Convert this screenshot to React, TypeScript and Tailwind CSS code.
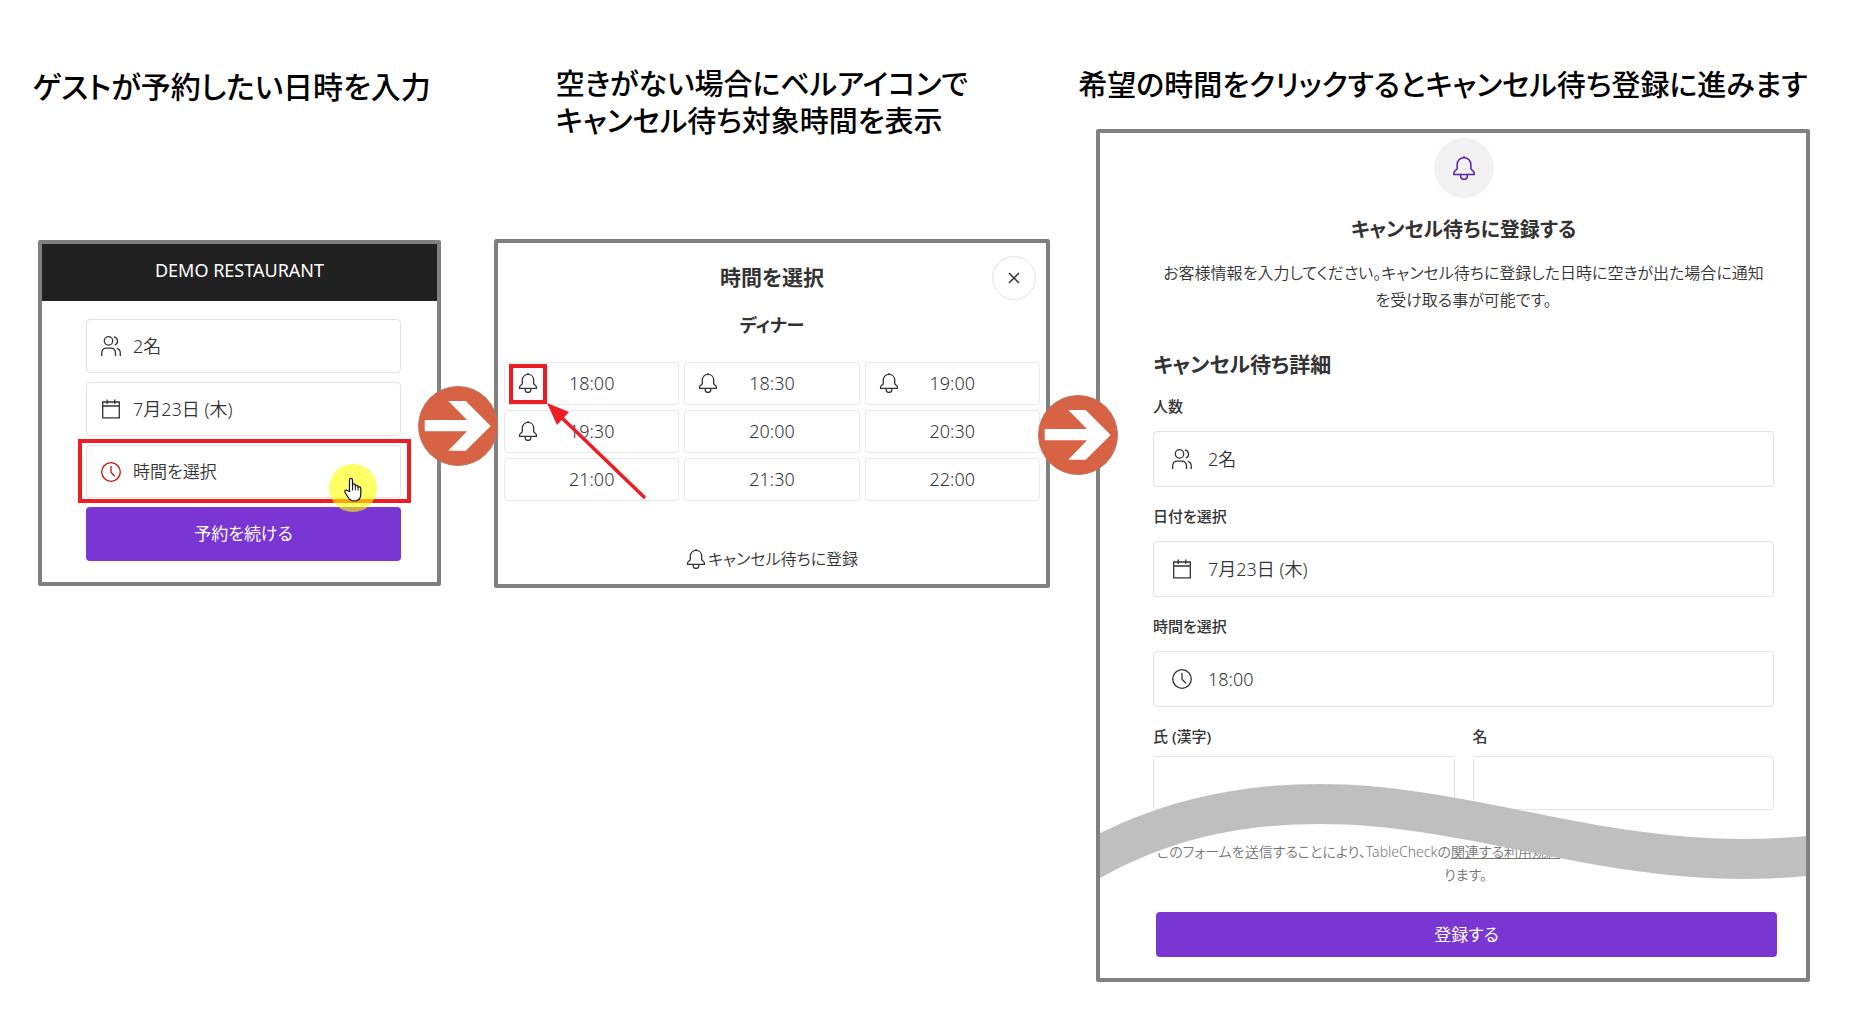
import React from "react";

type IconProps = { className?: string };

const Svg = ({ className = "h-5 w-5", children }: IconProps & { children: React.ReactNode }) => (
  <svg
    viewBox="0 0 20 20"
    className={`shrink-0 ${className}`}
    fill="none"
    stroke="currentColor"
    strokeWidth="1.3"
    aria-hidden="true"
  >
    {children}
  </svg>
);

const People = () => (
  <Svg>
    <circle cx="7.5" cy="4.9" r="4.2" />
    <path d="M.7 20v-2.800c0-3 2-5 5-5h3.800c3 0 5 2 5 5V20" />
    <path d="M12.800.8a4.200 4.200 0 0 1 1 8.100M15.800 12.400c2.200.5 3.500 2.200 3.500 4.800V20" />
  </Svg>
);

const Calendar = () => (
  <Svg>
    <path d="M1.700 3h16.600v15.800H1.700zM1.700 7h16.600M6.200.5v4.600M13.800.5v4.600" />
  </Svg>
);

const Clock = ({ className = "h-5 w-5" }: IconProps) => (
  <Svg className={className}>
    <circle cx="10" cy="10" r="9.300" />
    <path d="M10 4v6.200l3.800 4" />
  </Svg>
);

const Bell = ({ className = "h-5 w-5" }: IconProps) => (
  <Svg className={className}>
    <path d="M10 0v1.400M10 1.400c-3.500 0-5.700 2.600-5.700 5.700v3.400c0 1.200-2.700 1.800-2.700 3.400v1.500h16.800v-1.500c0-1.600-2.700-2.200-2.700-3.400V7.100c0-3.100-2.200-5.700-5.700-5.700z" />
    <path d="M7.200 15.400v1c0 1.800 1.200 3 2.800 3s2.800-1.200 2.800-3v-1" />
  </Svg>
);

const StepArrow = ({ className }: IconProps) => (
  <svg viewBox="0 0 80 80" className={`relative z-10 h-20 w-20 ${className}`} aria-hidden="true">
    <circle cx="40" cy="40" r="39.500" fill="#d86244" stroke="#b9755f" strokeWidth="1" />
    <path d="M6.700 34H49L30.300 15h17.400l25 25-25 24.700H30.300L49 45.300H6.700z" fill="#fff" />
  </svg>
);

const Hand = () => (
  <svg viewBox="0 0 20 26" className="mt-1 h-[26px] w-5" aria-hidden="true">
    <path
      d="M6.500 14.500V3c0-2.200 3-2.200 3 0v6.500V8.300c0-1.800 2.800-1.800 2.800 0v1.400c0-1.800 2.800-1.600 2.800 0v1.200c0-1.600 2.700-1.400 2.700.3V17c0 4-2.300 7-6.500 7-3.500 0-5-1.500-6.500-4.300L2 15.500c-1-2 1.200-3.200 2.500-1.700z"
      fill="#fff"
      stroke="#111"
      strokeWidth="1.200"
    />
    <path d="M9.500 9v4.500M12.300 9.500v4M15.100 10.500v3" stroke="#111" strokeWidth="1" />
  </svg>
);

const times = ["18:00", "18:30", "19:00", "19:30", "20:00", "20:30", "21:00", "21:30", "22:00"];

const heading = "flex justify-center whitespace-nowrap leading-[37px] font-medium text-black";
const field = "flex w-full items-center rounded border border-[#e3e3e3] bg-white text-left";

const Detail = ({ id, label, icon, value }: { id: string; label: string; icon: React.ReactNode; value: string }) => (
  <div className="mb-4">
    <label htmlFor={id} className="block text-[15px] leading-[26px] font-medium">
      {label}
    </label>
    <button id={id} type="button" className={`${field} mt-3 h-14 gap-4 px-[18px] text-lg`}>
      {icon}
      {value}
    </button>
  </div>
);

export default function App() {
  return (
    <main className="grid min-h-screen grid-cols-[403fr_53px_556fr_46px_714fr] items-start bg-white pr-[39px] pl-[38px] font-['Noto_Sans','Noto_Sans_CJK_JP',sans-serif] font-[350] text-[#333] [font-feature-settings:'palt']">
      <section className="min-w-0 pt-[68px]">
        <h2 className={`${heading} -ml-4 text-[30px]`}>ゲストが予約したい日時を入力</h2>
        <div className="mt-[135px] rounded-xs border-4 border-[#808080] bg-white">
          <header className="flex h-[57px] items-center justify-center bg-[#212121] pb-1.5 text-lg font-normal text-white">
            DEMO RESTAURANT
          </header>
          <div className="flex flex-col gap-[9px] pt-[18px] pr-9 pb-[21px] pl-11">
            <button type="button" className={`${field} h-[54px] gap-3 px-3.5 text-lg`}>
              <People />
              2名
            </button>
            <button type="button" className={`${field} h-[54px] gap-3 px-3.5 text-lg`}>
              <Calendar />
              7月23日 (木)
            </button>
            <div className="relative">
              <button type="button" className={`${field} h-[53px] gap-3 px-3.5 text-[17px]`}>
                <Clock className="h-5 w-5 text-[#c41212]" />
                時間を選択
              </button>
              <div className="pointer-events-none absolute -top-1.5 -right-2.5 -bottom-[5px] -left-2 border-4 border-[#ee1c25]" />
              <div className="pointer-events-none absolute top-[19px] right-6 z-10 flex h-12 w-12 items-center justify-center rounded-full bg-[#ffff00]/60">
                <Hand />
              </div>
            </div>
            <button type="button" className="h-[54px] rounded bg-[#7936d2] text-[17px] font-normal text-white">
              予約を続ける
            </button>
          </div>
        </div>
      </section>

      <StepArrow className="-ml-[23px] mt-[386px]" />

      <section className="min-w-0 pt-[65px]">
        <h2 className={`${heading} -ml-5 text-[29px]`}>
          <span>
            空きがない場合にベルアイコンで
            <br />
            キャンセル待ち対象時間を表示
          </span>
        </h2>
        <div className="mt-[100px] rounded-xs border-4 border-[#808080] bg-white px-1.5 pb-[11px]">
          <div className="relative pt-[18px] text-center font-bold">
            <h3 className="text-[21px] leading-8">時間を選択</h3>
            <p className="mt-4 text-lg leading-8">ディナー</p>
            <button
              type="button"
              aria-label="閉じる"
              className="absolute top-[13px] right-1 flex h-11 w-11 items-center justify-center rounded-full border border-[#e3e3e3]"
            >
              <svg viewBox="0 0 12 12" className="h-3 w-3" stroke="#333" strokeWidth="1.500" aria-hidden="true">
                <path d="M1 1l10 10M11 1L1 11" />
              </svg>
            </button>
          </div>
          <div className="mt-[21px] grid grid-cols-3 gap-[5px]">
            {times.map((t, i) => (
              <div key={t} className="relative">
                <button
                  type="button"
                  className="flex h-[43px] w-full items-center justify-center rounded border border-[#e8e8e8] pb-0.5 text-lg"
                >
                  {i < 4 && <Bell className="absolute left-3.5 h-5 w-5" />}
                  {t}
                </button>
                {i === 0 && (
                  <>
                    <div className="pointer-events-none absolute top-0.5 left-[5px] h-10 w-[38px] border-4 border-[#ee1c25]" />
                    <svg
                      viewBox="0 0 100 98"
                      className="pointer-events-none absolute top-[41px] left-[43px] z-10 h-[98px] w-[100px]"
                      aria-hidden="true"
                    >
                      <path d="M12 12l85 82" stroke="#ee1c25" strokeWidth="3.500" strokeLinecap="round" />
                      <path d="M0 0l22 9-12 13z" fill="#ee1c25" />
                    </svg>
                  </>
                )}
              </div>
            ))}
          </div>
          <p className="mt-11 flex items-center justify-center gap-0.5 text-base leading-7">
            <Bell />
            キャンセル待ちに登録
          </p>
        </div>
      </section>

      <StepArrow className="-ml-3 mt-[395px]" />

      <section className="min-w-0 pt-[66px]">
        <h2 className={`${heading} -ml-5 text-[29px]`}>希望の時間をクリックするとキャンセル待ち登録に進みます</h2>
        <form className="mt-[26px] rounded-xs border-4 border-[#808080] bg-white pr-8 pl-[53px]" onSubmit={(e) => e.preventDefault()}>
          <div className="mx-auto mt-[5px] flex h-[60px] w-[60px] items-center justify-center rounded-full bg-[#f2f2f2]">
            <Bell className="h-6 w-6 text-[#5b1fb0]" />
          </div>
          <h3 className="mt-4 text-center text-[20px] leading-8 font-bold">キャンセル待ちに登録する</h3>
          <p className="mt-3.5 text-center text-base leading-[27px]">
            お客様情報を入力してください。キャンセル待ちに登録した日時に空きが出た場合に通知
            <br />
            を受け取る事が可能です。
          </p>
          <h3 className="mt-[34px] text-[21px] leading-8 font-bold">キャンセル待ち詳細</h3>
          <div className="mt-[13px]">
            <Detail id="party" label="人数" icon={<People />} value="2名" />
            <Detail id="date" label="日付を選択" icon={<Calendar />} value="7月23日 (木)" />
            <Detail id="time" label="時間を選択" icon={<Clock />} value="18:00" />
          </div>
          <div className="relative">
            <div className="grid grid-cols-2 gap-[18px]">
              {[
                ["family", "氏 (漢字)"],
                ["given", "名"],
              ].map(([id, label]) => (
                <div key={id}>
                  <label htmlFor={id} className="block text-[15px] leading-[26px] font-medium">
                    {label}
                  </label>
                  <input id={id} type="text" className={`${field} mt-[7px] h-[54px] px-4 text-lg`} />
                </div>
              ))}
            </div>
            <p className="mt-[30px] pl-1 text-sm leading-[23px] text-[#767676]">
              <span className="block whitespace-nowrap">
                このフォームを送信することにより、TableCheckの
                <a href="#terms" className="underline">
                  関連する利用規約
                </a>
              </span>
              <span className="block text-center">ります。</span>
            </p>
            <div className="pointer-events-none absolute top-[61px] -right-8 -left-[53px]">
              <svg viewBox="0 0 706 96" preserveAspectRatio="none" className="h-24 w-full" aria-hidden="true">
                <path
                  d="M0 49C70 15 140 0 220 0C360 0 490 55 642 55Q676 55 706 52V92Q676 95 642 95C490 95 360 40 220 40C140 40 70 55 0 94Z"
                  fill="#bfbfbf"
                />
              </svg>
            </div>
          </div>
          <div className="-mr-[3px] ml-[3px]">
            <button
              type="submit"
              className="mt-[26px] mb-[21px] h-[45px] w-full rounded bg-[#7936d2] text-[17px] font-normal text-white"
            >
              登録する
            </button>
          </div>
        </form>
      </section>
    </main>
  );
}
